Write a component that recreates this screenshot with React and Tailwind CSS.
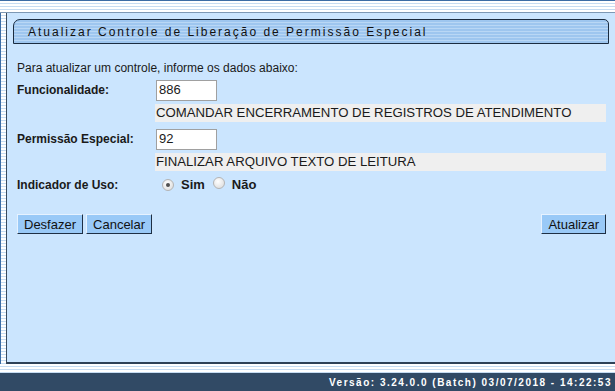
import React from 'react';

const stripes = 'bg-[repeating-linear-gradient(to_bottom,#ffffff_0px,#ffffff_2px,#c6dcf2_2px,#c6dcf2_3px)]';

const Radio = ({ checked }) => (
    <span className="inline-flex items-center justify-center w-[12px] h-[12px] rounded-full border border-[#b4b4b4] bg-[radial-gradient(circle_at_40%_35%,#ffffff,#d8d8d8)]">
        {checked && <span className="w-[4px] h-[4px] rounded-full bg-[#505050]" />}
    </span>
);

const Btn = ({ children }) => (
    <button className="h-[20px] px-[6px] bg-[#99c9f7] border border-t-[#e6f2ff] border-l-[#e6f2ff] border-r-[#1e2f44] border-b-[#1e2f44] text-[13px] leading-none text-[#111]">
        {children}
    </button>
);

const Field = ({ label, code, desc }) => (
    <div className="flex flex-col">
        <div className="flex items-center h-[22px]">
            <span className="w-[139px] font-bold">{label}</span>
            <div className="w-[61px] h-[21px] bg-white border border-[#a0a0a0] text-[13px] px-[2px] flex items-center">{code}</div>
        </div>
        <div className="ml-[138px] mt-[3px] h-[18px] bg-[#efefef] text-[13.2px] flex items-center pl-[1px]">{desc}</div>
    </div>
);

export default function App() {
    return (
        <div className="w-[615px] h-[391px] flex flex-col overflow-hidden text-[12px] text-[#1a1a1a]" style={{ fontFamily: '"Liberation Sans", Arial, sans-serif' }}>
            <div className={`h-[13px] border-t border-[#3c6ca4] border-b border-b-[#7d98b4] ${stripes}`} />
            <div className="flex flex-1">
                <div className={`w-[7px] border-l border-[#3c6ca4] border-r border-r-[#3a4a5c] ${stripes}`} />
                <div className="flex-1 bg-[#cbe5fe] border-b-2 border-[#2f4258] flex flex-col">
                    <div className="mt-[6px] ml-[6px] w-[596px] h-[25px] rounded-tl-[7px] rounded-tr-[5px] border border-[#1b2c40] bg-[#9fc7f0] bg-[repeating-linear-gradient(to_bottom,#9ec6ef_0px,#9ec6ef_2px,#b9d7f5_2px,#b9d7f5_3px)] flex items-center pl-[14px] tracking-[2px] text-[12px] text-[#111]">
                        Atualizar Controle de Liberação de Permissão Especial
                    </div>
                    <div className="pl-[10px] pr-[9px] pt-[17px] flex flex-col">
                        <div className="h-[14px] leading-[14px]">Para atualizar um controle, informe os dados abaixo:</div>
                        <div className="mt-[4px]">
                            <Field label="Funcionalidade:" code="886" desc="COMANDAR ENCERRAMENTO DE REGISTROS DE ATENDIMENTO" />
                        </div>
                        <div className="mt-[6px]">
                            <Field label="Permissão Especial:" code="92" desc="FINALIZAR ARQUIVO TEXTO DE LEITURA" />
                        </div>
                        <div className="flex items-center mt-[5px] h-[18px]">
                            <span className="w-[145px] font-bold">Indicador de Uso:</span>
                            <Radio checked />
                            <span className="ml-[7px] font-bold text-[13px]">Sim</span>
                            <span className="ml-[8px]"><Radio /></span>
                            <span className="ml-[7px] font-bold text-[13px]">Não</span>
                        </div>
                        <div className="flex mt-[20px] justify-between">
                            <div className="flex gap-[3px]">
                                <Btn>Desfazer</Btn>
                                <Btn>Cancelar</Btn>
                            </div>
                            <Btn>Atualizar</Btn>
                        </div>
                    </div>
                </div>
            </div>
            <div className={`h-[9px] ${stripes}`} />
            <div className="h-[18px] bg-[#314a65] flex items-center justify-end pr-[3px] text-white font-bold text-[10px] tracking-[1.5px]">
                Versão: 3.24.0.0 (Batch) 03/07/2018 - 14:22:53
            </div>
        </div>
    );
}
